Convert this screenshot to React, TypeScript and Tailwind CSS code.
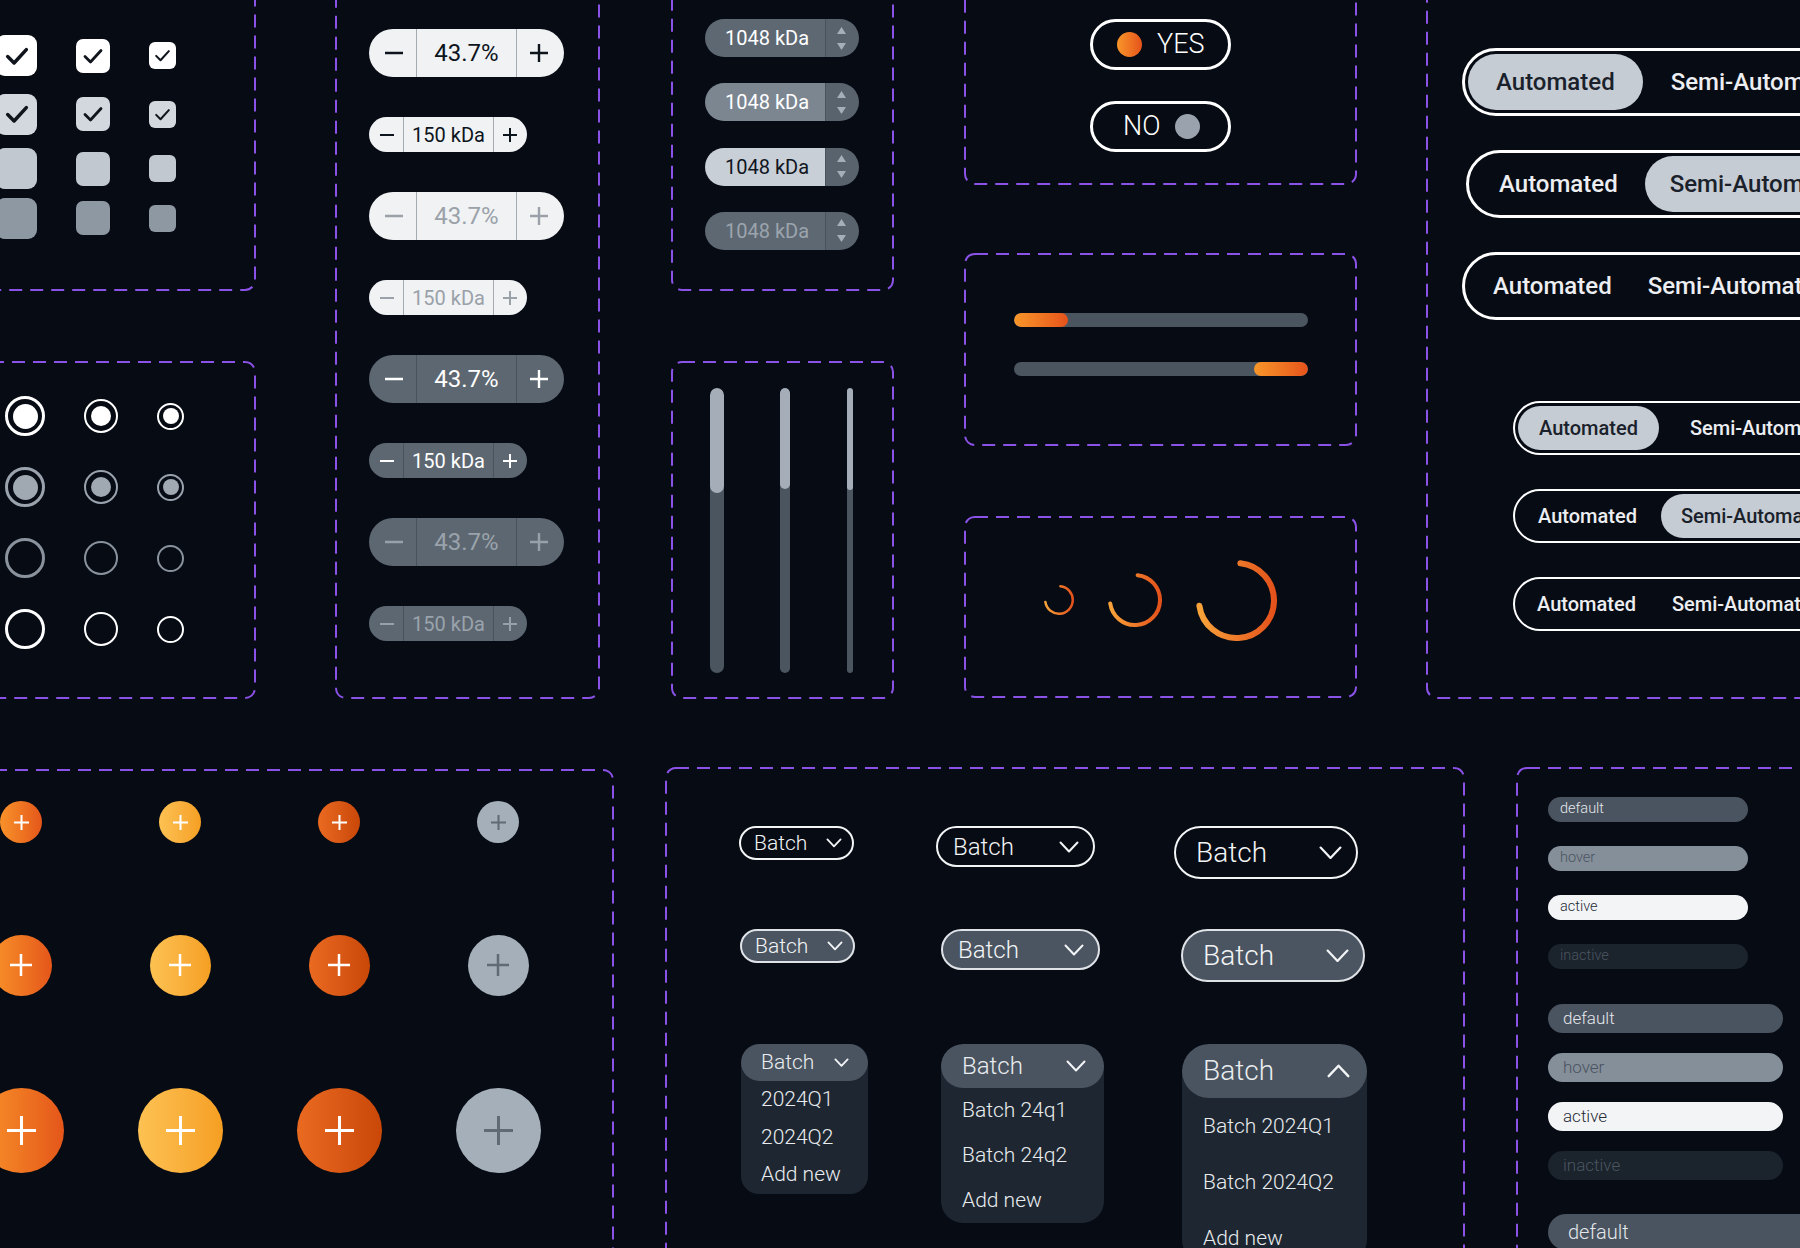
import React from 'react';

type Kids = { children?: React.ReactNode; className?: string };

// dashed purple outline drawn over each panel; content is laid out by flow
function Panel({ className = '', children }: Kids) {
  return (
    <div className={`relative shrink-0 ${className}`}>
      <svg className="pointer-events-none absolute inset-0 h-full w-full overflow-visible" aria-hidden="true">
        <rect x="0" y="0" width="100%" height="100%" rx="10" fill="none" stroke="#8a52e6" strokeWidth="2" strokeDasharray="13 8" />
      </svg>
      {children}
    </div>
  );
}

function Plus({ size, stroke, color }: { size: number; stroke: number; color: string }) {
  return (
    <svg width={size} height={size} viewBox={`0 0 ${size} ${size}`}>
      <path d={`M${size / 2} 0V${size}M0 ${size / 2}H${size}`} stroke={color} strokeWidth={stroke} />
    </svg>
  );
}

function Minus({ size, stroke, color }: { size: number; stroke: number; color: string }) {
  return (
    <svg width={size} height={size} viewBox={`0 0 ${size} ${size}`}>
      <path d={`M0 ${size / 2}H${size}`} stroke={color} strokeWidth={stroke} />
    </svg>
  );
}

function Check({ size, stroke }: { size: number; stroke: number }) {
  return (
    <svg width={size} height={size} viewBox="0 0 24 24">
      <path d="M4 12.5l5.5 5.5L20 6.5" fill="none" stroke="#10151d" strokeWidth={stroke} strokeLinecap="round" strokeLinejoin="round" />
    </svg>
  );
}

function Chevron({ w, stroke, up = false, color = '#f2f4f6' }: { w: number; stroke: number; up?: boolean; color?: string }) {
  const h = w / 2 + stroke;
  const m = stroke / 2 + 0.5;
  const d = up ? `M${m} ${h - m}L${w / 2} ${m}L${w - m} ${h - m}` : `M${m} ${m}L${w / 2} ${h - m}L${w - m} ${m}`;
  return (
    <svg width={w} height={h} viewBox={`0 0 ${w} ${h}`}>
      <path d={d} fill="none" stroke={color} strokeWidth={stroke} strokeLinecap="round" strokeLinejoin="round" />
    </svg>
  );
}

function Spinner({ size, stroke, id }: { size: number; stroke: number; id: string }) {
  const r = (size - stroke) / 2;
  const c = size / 2;
  const pt = (deg: number) => {
    const a = (deg * Math.PI) / 180;
    return [c + r * Math.sin(a), c - r * Math.cos(a)];
  };
  const [x1, y1] = pt(6);
  const [x2, y2] = pt(262);
  return (
    <svg width={size} height={size} viewBox={`0 0 ${size} ${size}`}>
      <defs>
        <linearGradient id={id} x1="0" y1="0" x2="1" y2="0">
          <stop offset="0" stopColor="#f8a33a" />
          <stop offset="1" stopColor="#e4521b" />
        </linearGradient>
      </defs>
      <path d={`M${x1} ${y1}A${r} ${r} 0 1 1 ${x2} ${y2}`} fill="none" stroke={`url(#${id})`} strokeWidth={stroke} strokeLinecap="round" />
    </svg>
  );
}

const boxSizes = [
  { cls: 'h-[41px] w-[41px] rounded-[9px]', icon: 28, sw: 3 },
  { cls: 'h-[34px] w-[34px] rounded-[7px]', icon: 24, sw: 2.8 },
  { cls: 'h-[27px] w-[27px] rounded-[6px]', icon: 19, sw: 2.6 },
];

const boxRows = [
  { bg: 'bg-white', check: true, mt: '' },
  { bg: 'bg-[#d3d8de]', check: true, mt: 'mt-[17.5px]' },
  { bg: 'bg-[#c1c8d0]', check: false, mt: 'mt-[13.5px]' },
  { bg: 'bg-[#8e98a3]', check: false, mt: 'mt-[8.5px]' },
];

const radioSizes = [
  { outer: 'h-[40px] w-[40px] border-[3px]', dot: 'h-[25px] w-[25px]' },
  { outer: 'h-[34px] w-[34px] border-[2.5px]', dot: 'h-[20px] w-[20px]' },
  { outer: 'h-[27px] w-[27px] border-2', dot: 'h-[16px] w-[16px]' },
];

const radioRows = [
  { ring: 'border-white', dot: 'bg-white' },
  { ring: 'border-[#9aa3ad]', dot: 'bg-[#a0a9b2]' },
  { ring: 'border-[#8a939d]', dot: '' },
  { ring: 'border-white', dot: '' },
];

function Stepper({ big, tone, disabled, label }: { big: boolean; tone: 'light' | 'gray'; disabled: boolean; label: string }) {
  const light = tone === 'light';
  const bg = light ? 'bg-[#f0f2f4]' : 'bg-[#5d6771]';
  const divider = light ? 'border-[#a4aab1]' : 'border-[#4a535c]';
  const text = light ? (disabled ? 'text-[#9aa1a9]' : 'text-[#0d141c]') : disabled ? 'text-[#9aa3ac]' : 'text-white';
  const ic = light ? (disabled ? '#9aa1a9' : '#0d141c') : disabled ? '#98a1aa' : '#ffffff';
  const isz = big ? 18 : 14;
  const isw = big ? 2.4 : 2;
  return (
    <div className={`flex overflow-hidden rounded-full ${bg} ${big ? 'h-[48px]' : 'h-[35px]'}`}>
      <div className={`flex items-center justify-center ${big ? 'w-[47px] pl-[3px]' : 'w-[34px] pl-[2px]'}`}>
        <Minus size={isz} stroke={isw} color={ic} />
      </div>
      <div className={`flex items-center justify-center border-x font-normal leading-none ${divider} ${text} ${big ? 'w-[101px] text-[24px]' : 'w-[91px] text-[20px]'}`}>
        {label}
      </div>
      <div className={`flex items-center justify-center ${big ? 'w-[47px] pr-[3px]' : 'w-[33px] pr-[2px]'}`}>
        <Plus size={isz} stroke={isw} color={ic} />
      </div>
    </div>
  );
}

const steppers = [
  { big: true, tone: 'light' as const, disabled: false, label: '43.7%' },
  { big: false, tone: 'light' as const, disabled: false, label: '150 kDa' },
  { big: true, tone: 'light' as const, disabled: true, label: '43.7%' },
  { big: false, tone: 'light' as const, disabled: true, label: '150 kDa' },
  { big: true, tone: 'gray' as const, disabled: false, label: '43.7%' },
  { big: false, tone: 'gray' as const, disabled: false, label: '150 kDa' },
  { big: true, tone: 'gray' as const, disabled: true, label: '43.7%' },
  { big: false, tone: 'gray' as const, disabled: true, label: '150 kDa' },
];

const spinboxes = [
  'bg-[#5e6872] text-white',
  'bg-[#7b8691] text-white',
  'bg-[#c8cfd7] text-[#10161e]',
  'bg-[#5e6872] text-[#9ba4ad]',
];

function SpinBox({ cls }: { cls: string }) {
  return (
    <div className="flex h-[38px] w-[154px] overflow-hidden rounded-full">
      <div className={`flex w-[120px] items-center justify-center pl-[4px] text-[20px] font-normal leading-none ${cls}`}>1048 kDa</div>
      <div className="flex w-[34px] flex-col items-center justify-center gap-[9px] border-l border-[#4a535c] bg-[#59636d] pr-[3px]">
        <svg width="9" height="7" viewBox="0 0 9 7">
          <path d="M4.5 0L9 7H0Z" fill="#a6aeb7" />
        </svg>
        <svg width="9" height="7" viewBox="0 0 9 7">
          <path d="M0 0H9L4.5 7Z" fill="#a6aeb7" />
        </svg>
      </div>
    </div>
  );
}

type SegProps = { big: boolean; active: number | null; className?: string; first: string; second: string };

function Segmented({ big, active, className = '', first, second }: SegProps) {
  const seg = big ? 'h-[56px] text-[24px]' : 'h-[44px] text-[20px]';
  const on = 'bg-[#c5ccd4] text-[#1a212b]';
  const off = 'text-[#eceef1]';
  return (
    <div className={`flex w-max items-center rounded-full border-white p-[3px] ${big ? 'border-[3px]' : 'border-2'} ${className}`}>
      <div className={`flex items-center whitespace-nowrap rounded-full font-medium leading-none ${seg} ${first} ${active === 0 ? on : off}`}>Automated</div>
      <div className={`flex items-center whitespace-nowrap rounded-full font-medium leading-none ${seg} ${second} ${active === 1 ? on : off}`}>Semi-Automated</div>
    </div>
  );
}

const fabCols = [
  { bg: 'bg-linear-to-r from-[#f8922a] to-[#e4561a]', ic: '#ffffff' },
  { bg: 'bg-linear-to-r from-[#fdc252] to-[#f59f22]', ic: '#ffffff' },
  { bg: 'bg-linear-to-r from-[#ea6a21] to-[#c94707]', ic: '#ffffff' },
  { bg: 'bg-[#a4afba]', ic: '#5f6a75' },
];

const fabRows = [
  { d: 'h-[42px] w-[42px]', row: 'h-[42px]', icon: 15, sw: 2, mt: '' },
  { d: 'h-[61px] w-[61px]', row: 'h-[61px]', icon: 22, sw: 2.5, mt: 'mt-[91.5px]' },
  { d: 'h-[85px] w-[85px]', row: 'h-[85px]', icon: 29, sw: 3, mt: 'mt-[92px]' },
];

type DropSize = 'sm' | 'md' | 'lg';

const pillSize: Record<DropSize, { box: string; text: string; chev: number; sw: number }> = {
  sm: { box: 'h-[34px] w-[115px] pl-[13px] pr-[10px]', text: 'text-[21px]', chev: 16, sw: 1.8 },
  md: { box: 'h-[41px] w-[159px] pl-[15px] pr-[14px]', text: 'text-[24px]', chev: 20, sw: 2 },
  lg: { box: 'h-[53px] w-[184px] pl-[20px] pr-[14px]', text: 'text-[28px]', chev: 23, sw: 2.2 },
};

function DropPill({ size, hover, className = '' }: { size: DropSize; hover: boolean; className?: string }) {
  const s = pillSize[size];
  return (
    <div
      className={`flex items-center justify-between rounded-full border-2 font-light leading-none text-[#f2f4f6] ${s.box} ${
        hover ? 'border-[#dfe3e7] bg-[#4b5561]' : 'border-[#f2f4f6]'
      } ${className}`}
    >
      <span className={s.text}>Batch</span>
      <Chevron w={s.chev} stroke={s.sw} />
    </div>
  );
}

const openSize: Record<DropSize, { box: string; head: string; text: string; item: string; chev: number; sw: number; items: string[] }> = {
  sm: {
    box: 'w-[127px] rounded-[18px]',
    head: 'h-[37px] pl-[20px] pr-[19px]',
    text: 'text-[21px]',
    item: 'h-[37.5px] pl-[20px]',
    chev: 15,
    sw: 1.8,
    items: ['2024Q1', '2024Q2', 'Add new'],
  },
  md: {
    box: 'w-[163px] rounded-[22px]',
    head: 'h-[44px] pl-[21px] pr-[18px]',
    text: 'text-[24px]',
    item: 'h-[45px] pl-[21px]',
    chev: 20,
    sw: 2,
    items: ['Batch 24q1', 'Batch 24q2', 'Add new'],
  },
  lg: {
    box: 'w-[185px] rounded-[27px]',
    head: 'h-[54px] pl-[21px] pr-[17px]',
    text: 'text-[28px]',
    item: 'h-[56px] pl-[21px]',
    chev: 23,
    sw: 2.4,
    items: ['Batch 2024Q1', 'Batch 2024Q2', 'Add new'],
  },
};

function DropOpen({ size, className = '' }: { size: DropSize; className?: string }) {
  const s = openSize[size];
  return (
    <div className={`overflow-hidden bg-[#1e2731] font-light leading-none text-[#e9ecef] ${s.box} ${className}`}>
      <div className={`flex items-center justify-between rounded-full bg-[#4a5460] ${s.head}`}>
        <span className={s.text}>Batch</span>
        <Chevron w={s.chev} stroke={s.sw} up={size === 'lg'} />
      </div>
      {s.items.map((t) => (
        <div key={t} className={`flex items-center whitespace-nowrap text-[21px] ${s.item}`}>
          {t}
        </div>
      ))}
    </div>
  );
}

const barStates = [
  { label: 'default', cls: 'bg-[#4a5360] text-[#e4e7eb]' },
  { label: 'hover', cls: 'bg-[#858f9a] text-[#4a5360]' },
  { label: 'active', cls: 'bg-[#f3f4f6] text-[#252c36]' },
  { label: 'inactive', cls: 'bg-[#1b232c] text-[#4b5560]' },
];

export default function App() {
  return (
    <div className="h-[1248px] w-[1800px] overflow-hidden bg-[#070b14] font-[Roboto,'Liberation_Sans',sans-serif]">
      {/* top band */}
      <div className="-mt-[20px] flex h-[718px] items-start">
        <div className="-ml-[40px] flex w-[295px] shrink-0 flex-col">
          <Panel className="h-[310px] w-[295px]">
            <div className="flex flex-col pl-[36px] pt-[55px]">
              {boxRows.map((r, i) => (
                <div key={i} className={`flex h-[41px] items-center gap-[39px] ${r.mt}`}>
                  {boxSizes.map((s, j) => (
                    <div key={j} className={`flex items-center justify-center ${s.cls} ${r.bg}`}>
                      {r.check && <Check size={s.icon} stroke={s.sw} />}
                    </div>
                  ))}
                </div>
              ))}
            </div>
          </Panel>
          <Panel className="mt-[72px] h-[336px] w-[295px]">
            <div className="flex flex-col gap-[31px] pl-[45px] pt-[34px]">
              {radioRows.map((r, i) => (
                <div key={i} className="flex h-[40px] items-center gap-[39px]">
                  {radioSizes.map((s, j) => (
                    <div key={j} className={`flex items-center justify-center rounded-full ${s.outer} ${r.ring}`}>
                      {r.dot && <div className={`rounded-full ${s.dot} ${r.dot}`} />}
                    </div>
                  ))}
                </div>
              ))}
            </div>
          </Panel>
        </div>

        <Panel className="ml-[81px] h-[718px] w-[263px]">
          <div className="flex flex-col gap-[33.5px] pl-[33px] pt-[49px]">
            {steppers.map((s, i) => (
              <div key={i} className="flex h-[48px] items-center">
                <Stepper {...s} />
              </div>
            ))}
          </div>
        </Panel>

        <div className="ml-[73px] flex w-[221px] shrink-0 flex-col">
          <Panel className="h-[310px] w-[221px]">
            <div className="flex flex-col gap-[26.3px] pl-[33px] pt-[39px]">
              {spinboxes.map((c, i) => (
                <SpinBox key={i} cls={c} />
              ))}
            </div>
          </Panel>
          <Panel className="mt-[72px] h-[336px] w-[221px]">
            <div className="flex pl-[38px] pt-[26px]">
              <div className="h-[285px] w-[14px] overflow-hidden rounded-full bg-[#4a5560]">
                <div className="h-[105px] rounded-full bg-[#a5aeb8]" />
              </div>
              <div className="ml-[56px] h-[285px] w-[10px] overflow-hidden rounded-full bg-[#4a5560]">
                <div className="h-[101px] rounded-full bg-[#a5aeb8]" />
              </div>
              <div className="ml-[57px] h-[285px] w-[6px] overflow-hidden rounded-full bg-[#4a5560]">
                <div className="h-[102px] rounded-full bg-[#a5aeb8]" />
              </div>
            </div>
          </Panel>
        </div>

        <div className="ml-[72px] flex w-[391px] shrink-0 flex-col">
          <Panel className="h-[204px] w-[391px]">
            <div className="flex flex-col items-center gap-[31px] pt-[39px]">
              <div className="flex h-[51px] w-[141px] items-center gap-[15px] rounded-full border-[3px] border-white pl-[24px]">
                <div className="h-[25px] w-[25px] rounded-full bg-linear-to-r from-[#f8952a] to-[#e5521b]" />
                <span className="text-[27px] font-light leading-none text-white">YES</span>
              </div>
              <div className="flex h-[51px] w-[141px] items-center gap-[15px] rounded-full border-[3px] border-white pl-[30px]">
                <span className="text-[27px] font-light leading-none text-white">NO</span>
                <div className="h-[25px] w-[25px] rounded-full bg-[#9aa3ad]" />
              </div>
            </div>
          </Panel>
          <Panel className="mt-[70px] h-[191px] w-[391px]">
            <div className="flex flex-col items-center gap-[35px] pt-[59px]">
              <div className="flex h-[14px] w-[294px] overflow-hidden rounded-full bg-[#4a5560]">
                <div className="h-full w-[54px] rounded-full bg-linear-to-r from-[#f8962a] to-[#e5521b]" />
              </div>
              <div className="flex h-[14px] w-[294px] justify-end overflow-hidden rounded-full bg-[#4a5560]">
                <div className="h-full w-[54px] rounded-full bg-linear-to-r from-[#f8962a] to-[#e5521b]" />
              </div>
            </div>
          </Panel>
          <Panel className="mt-[72px] h-[180px] w-[391px]">
            <div className="flex h-full items-center justify-center gap-[34px] pb-[14px]">
              <Spinner size={30} stroke={2.5} id="sp1" />
              <Spinner size={54} stroke={4} id="sp2" />
              <Spinner size={81} stroke={6} id="sp3" />
            </div>
          </Panel>
        </div>

        <Panel className="ml-[71px] h-[718px] w-[460px]">
          <div className="flex flex-col pl-[35px] pt-[68px]">
            <div className="flex flex-col gap-[34px]">
              <Segmented big active={0} first="px-[28px]" second="px-[28px]" />
              <Segmented big active={1} className="ml-[4px]" first="px-[27px]" second="px-[25px]" />
              <Segmented big active={null} first="pl-[25px] pr-[18px]" second="pl-[18px] pr-[24px]" />
            </div>
            <div className="ml-[51px] mt-[81px] flex flex-col gap-[34px]">
              <Segmented big={false} active={0} first="px-[21px]" second="pl-[31px] pr-[21px]" />
              <Segmented big={false} active={1} first="pl-[20px] pr-[24px]" second="px-[20px]" />
              <Segmented big={false} active={null} first="pl-[19px] pr-[18px]" second="pl-[18px] pr-[20px]" />
            </div>
          </div>
        </Panel>
      </div>

      {/* bottom band */}
      <div className="mt-[70px] flex items-start">
        <Panel className="-ml-[100px] mt-[2px] h-[560px] w-[713px]">
          <div className="flex flex-col pl-[41.5px] pt-[31px]">
            {fabRows.map((r, i) => (
              <div key={i} className={`grid grid-cols-[repeat(4,159px)] items-center ${r.row} ${r.mt}`}>
                {fabCols.map((c, j) => (
                  <div key={j} className="flex justify-center">
                    <div className={`flex items-center justify-center rounded-full ${r.d} ${c.bg}`}>
                      <Plus size={r.icon} stroke={r.sw} color={c.ic} />
                    </div>
                  </div>
                ))}
              </div>
            ))}
          </div>
        </Panel>

        <Panel className="ml-[53px] h-[560px] w-[798px]">
          <div className="flex pt-[58px]">
            <div className="ml-[73px] flex w-[128px] shrink-0 flex-col">
              <div className="h-[103px]">
                <DropPill size="sm" hover={false} />
              </div>
              <div className="h-[115px]">
                <DropPill size="sm" hover className="ml-[1px]" />
              </div>
              <DropOpen size="sm" className="ml-[2px]" />
            </div>
            <div className="ml-[69px] flex w-[168px] shrink-0 flex-col">
              <div className="h-[103px]">
                <DropPill size="md" hover={false} />
              </div>
              <div className="h-[115px]">
                <DropPill size="md" hover className="ml-[5px]" />
              </div>
              <DropOpen size="md" className="ml-[5px]" />
            </div>
            <div className="ml-[70px] flex w-[193px] shrink-0 flex-col">
              <div className="h-[103px]">
                <DropPill size="lg" hover={false} />
              </div>
              <div className="h-[115px]">
                <DropPill size="lg" hover className="ml-[7px]" />
              </div>
              <DropOpen size="lg" className="ml-[8px]" />
            </div>
          </div>
        </Panel>

        <Panel className="ml-[53px] h-[560px] w-[400px]">
          <div className="flex flex-col pl-[31px] pt-[29px]">
            <div className="flex flex-col gap-[24px]">
              {barStates.map((b) => (
                <div key={b.label} className={`flex h-[25px] w-[200px] items-center rounded-full pl-[12px] text-[14.5px] font-light leading-none ${b.cls}`}>
                  {b.label}
                </div>
              ))}
            </div>
            <div className="mt-[35px] flex flex-col gap-[20px]">
              {barStates.map((b) => (
                <div key={b.label} className={`flex h-[29px] w-[235px] items-center rounded-full pl-[15px] text-[17px] font-light leading-none ${b.cls}`}>
                  {b.label}
                </div>
              ))}
            </div>
            <div className="mt-[34px] flex flex-col gap-[22px]">
              {barStates.map((b) => (
                <div key={b.label} className={`flex h-[36px] w-[300px] items-center rounded-full pl-[20px] text-[20px] font-light leading-none ${b.cls}`}>
                  {b.label}
                </div>
              ))}
            </div>
          </div>
        </Panel>
      </div>
    </div>
  );
}
